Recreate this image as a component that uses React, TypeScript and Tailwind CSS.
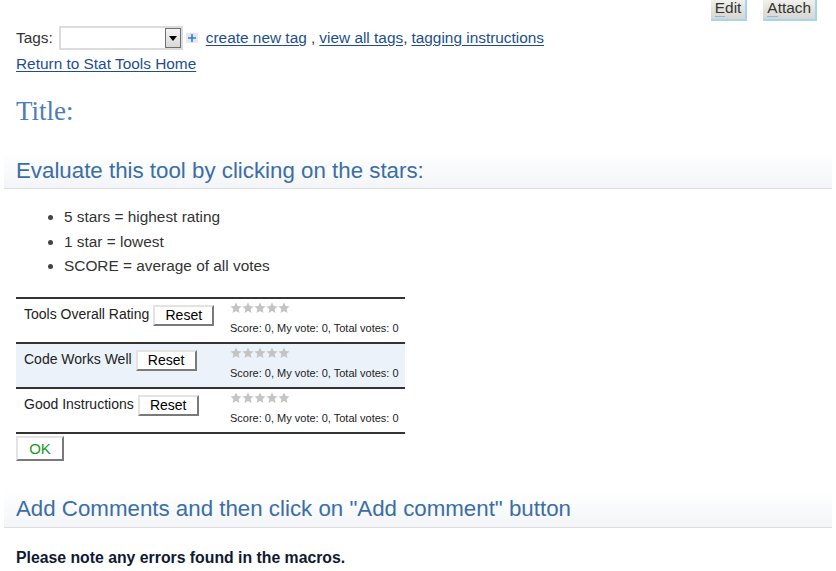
import React from 'react';

const font = { fontFamily: '"Liberation Sans", Arial, sans-serif' };

function Stars() {
  return (
    <div className="flex">
      {[0, 1, 2, 3, 4].map((i) => (
        <svg key={i} width="12" height="12" viewBox="0 0 24 24">
          <path
            d="M12 1l3.3 7.2 7.7.8-5.8 5.2 1.7 7.6L12 17.9l-6.9 3.9 1.7-7.6L1 9l7.7-.8z"
            fill="#c4c4c4"
          />
        </svg>
      ))}
    </div>
  );
}

function ResetButton() {
  return (
    <button className="h-[21px] w-[61px] bg-white border-2 border-t-[#e3e3e3] border-l-[#e3e3e3] border-r-[#7a7a7a] border-b-[#7a7a7a] text-[14px] leading-none text-black">
      Reset
    </button>
  );
}

function RatingRow({ label, shaded }: { label: string; shaded?: boolean }) {
  return (
    <div className={`flex h-[45px] border-b-2 border-[#333] ${shaded ? 'bg-[#ebf2fa]' : 'bg-white'}`}>
      <div className="w-[214px] flex items-start pt-[6px] pl-[8px] gap-[4px]">
        <span className="text-[14px] text-[#222] leading-[18px]">{label}</span>
        <ResetButton />
      </div>
      <div className="flex flex-col pt-[3px]">
        <Stars />
        <span className="text-[11px] text-[#222] mt-[8px] leading-[13px]">Score: 0, My vote: 0, Total votes: 0</span>
      </div>
    </div>
  );
}

function SectionHeader({ children }: { children: React.ReactNode }) {
  return (
    <div className="mx-[4px] h-[38px] bg-gradient-to-b from-white to-[#f3f5f8] border-b border-[#dedede] flex items-end pb-[6px] pl-[12px]">
      <h2 className="text-[22.3px] leading-none text-[#3b6ea6]">{children}</h2>
    </div>
  );
}

function TopButton({ label }: { label: string }) {
  return (
    <button className="h-[21px] px-[4px] bg-gradient-to-b from-[#f0f0ec] to-[#d6d5cf] border-r-2 border-b-2 border-[#a6d4e8] text-[15.4px] leading-[15px] text-[#333] flex items-start">
      <span>
        <span className="border-b border-[#8fb8d8]">{label[0]}</span>
        {label.slice(1)}
      </span>
    </button>
  );
}

export default function App() {
  return (
    <div className="w-[836px] h-[571px] overflow-hidden bg-white text-[#333]" style={font}>
      <div className="flex justify-end gap-[16px] pr-[19px] h-[22px]">
        <TopButton label="Edit" />
        <TopButton label="Attach" />
      </div>

      <div className="px-[16px]">
        <div className="flex items-center h-[32px] text-[15.4px]">
          <span className="text-[#333] mr-[6px]">Tags:</span>
          <div className="w-[124px] h-[24px] border-2 border-[#dcdcdc] bg-white flex justify-end">
            <div className="w-[16px] h-[20px] border border-[#6f6f6f] bg-gradient-to-b from-[#f4f4f4] to-[#d8d8d8] flex items-center justify-center">
              <svg width="8" height="5" viewBox="0 0 8 5">
                <path d="M0 0h8L4 5z" fill="#000" />
              </svg>
            </div>
          </div>
          <div className="ml-[3px] mr-[8px] w-[12px] h-[10px] bg-[#e6eaf0] flex items-center justify-center">
            <svg width="8" height="8" viewBox="0 0 8 8">
              <path d="M3.2 0h1.6v3.2H8v1.6H4.8V8H3.2V4.8H0V3.2h3.2z" fill="#3a7bd5" />
            </svg>
          </div>
          <a className="text-[#1f4e8c] underline underline-offset-2">create new tag</a>
          <span className="text-[#333]">&nbsp;, </span>
          <a className="text-[#1f4e8c] underline underline-offset-2 ml-[4px]">view all tags</a>
          <span className="text-[#333]">, </span>
          <a className="text-[#1f4e8c] underline underline-offset-2 ml-[4px]">tagging instructions</a>
        </div>
        <div className="h-[22px] text-[15.4px] leading-[20px]">
          <a className="text-[#1f4e8c] underline underline-offset-2">Return to Stat Tools Home</a>
        </div>
        <h1
          className="mt-[20px] text-[27px] leading-[30px] text-[#4d7db4]"
          style={{ fontFamily: '"Liberation Serif", "Times New Roman", serif' }}
        >
          Title:
        </h1>
      </div>

      <div className="mt-[25px]">
        <SectionHeader>Evaluate this tool by clicking on the stars:</SectionHeader>
      </div>

      <div className="px-[16px]">
        <ul className="list-disc pl-[48px] mt-[16px] text-[15.4px] leading-[24.5px] text-[#333] marker:text-[#444]">
          <li>5 stars = highest rating</li>
          <li>1 star = lowest</li>
          <li>SCORE = average of all votes</li>
        </ul>

        <div className="mt-[18px] w-[389px] border-t-2 border-[#333]">
          <RatingRow label="Tools Overall Rating" />
          <RatingRow label="Code Works Well" shaded />
          <RatingRow label="Good Instructions" />
        </div>

        <button className="mt-[2px] h-[25px] w-[48px] bg-white border-2 border-t-[#e3e3e3] border-l-[#e3e3e3] border-r-[#7a7a7a] border-b-[#7a7a7a] text-[15px] leading-none text-[#1a9a1a]">
          OK
        </button>
      </div>

      <div className="mt-[29px]">
        <SectionHeader>Add Comments and then click on "Add comment" button</SectionHeader>
      </div>

      <div className="px-[16px] mt-[18px]">
        <p className="text-[15.8px] font-bold text-[#0f1a30]">Please note any errors found in the macros.</p>
      </div>
    </div>
  );
}
